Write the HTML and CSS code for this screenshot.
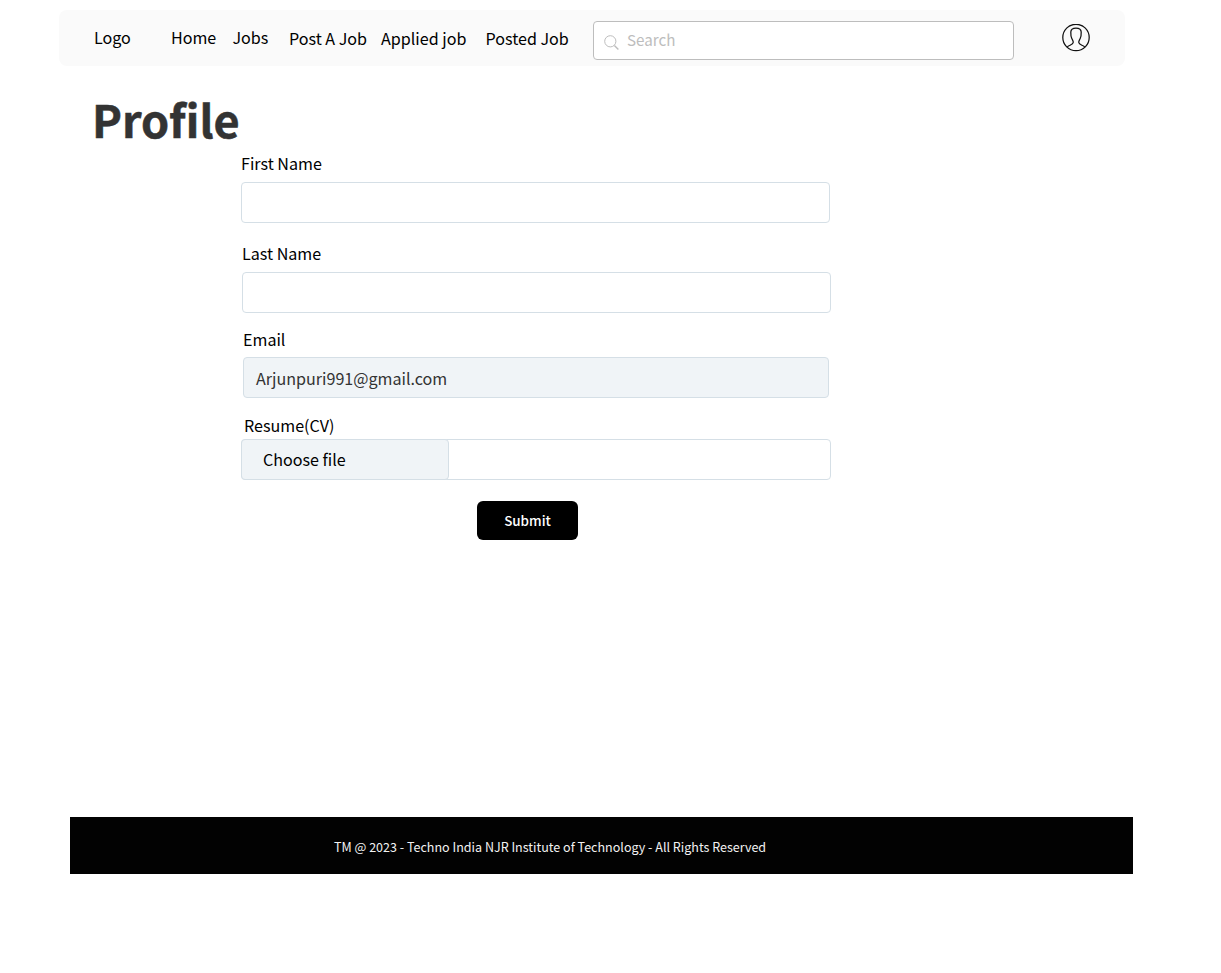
FILE: index.html
```html
<!DOCTYPE html>
<html lang="en">
<head>
<meta charset="utf-8">
<title>Profile</title>
<link rel="stylesheet" href="styles.css">
</head>
<body>
<header class="navbar">
  <a class="logo">Logo</a>
  <nav class="links">
    <a>Home</a>
    <a>Jobs</a>
    <a class="low">Post A Job</a>
    <a class="low">Applied job</a>
    <a class="low">Posted Job</a>
  </nav>
  <div class="search">
    <svg class="search-icon" width="16" height="16" viewBox="0 0 16 16" fill="none" stroke="#bdbdbd">
      <circle cx="6.3" cy="6.3" r="5.6"/>
      <path d="M10.4 10.4L14.4 14.4" stroke-width="1.4"/>
    </svg>
    <span>Search</span>
  </div>
  <svg class="avatar" width="28" height="28" viewBox="0 0 28 28" fill="none" stroke="#111" stroke-width="1.25">
    <circle cx="14" cy="13.5" r="13.2"/>
    <path d="M5.2 23.1C6.6 21.1 10.8 21.1 11.2 18.7C11.5 17 10.6 16.3 9.8 14.5C8.9 12.7 8.7 11 8.8 8C8.9 5.2 10.8 4 14 4S19.1 5.2 19.2 8C19.3 11 19.1 12.7 18.2 14.5C17.4 16.3 16.5 17 16.8 18.7C17.2 21.1 21.4 21.1 22.8 23.1"/>
  </svg>
</header>
<main class="page">
  <h1 class="title">Profile</h1>
  <form class="form">
    <div class="field first">
      <label>First Name</label>
      <div class="input"></div>
    </div>
    <div class="field last">
      <label>Last Name</label>
      <div class="input"></div>
    </div>
    <div class="field email">
      <label>Email</label>
      <div class="input filled">Arjunpuri991@gmail.com</div>
    </div>
    <div class="field resume">
      <label>Resume(CV)</label>
      <div class="input file"><span class="choose">Choose file</span></div>
    </div>
    <button class="submit" type="button">Submit</button>
  </form>
</main>
<footer class="footer">TM @ 2023 - Techno India NJR Institute of Technology - All Rights Reserved</footer>
</body>
</html>
```

FILE: styles.css
```css
* {
  box-sizing: border-box;
}

body {
  margin: 0;
  padding-top: 10px;
  background: #fff;
  color: #000;
  font: 16.1px/24px "Noto Sans CJK SC", "Noto Sans", sans-serif;
}

.navbar {
  display: flex;
  width: 1066px;
  height: 56px;
  margin-left: 59px;
  padding-left: 35px;
  border-radius: 8px;
  background: #fafafa;
  white-space: nowrap;
}

.logo {
  width: 77px;
  padding-top: 15px;
}

.links {
  display: grid;
  grid-template-columns: 61.5px 56.5px 92px 104.5px 107.5px;
  padding-top: 15px;
}

.low {
  padding-top: 1px;
}

.search {
  display: flex;
  width: 421px;
  height: 39px;
  margin-top: 11px;
  padding: 5px 10px;
  gap: 7px;
  border: 1px solid #bdbdbd;
  border-radius: 4px;
  background: #fff;
  color: #bdbdbd;
  font-size: 15.2px;
}

.search-icon {
  margin-top: 8px;
}

.avatar {
  margin: 14px 0 0 48px;
}

.page {
  height: 751px;
  padding: 19px 0 0 92px;
}

.title {
  height: 66px;
  margin: 0;
  color: #333;
  font-size: 45px;
  font-weight: 700;
  line-height: 68px;
  -webkit-text-stroke: 0.5px #333;
}

.form {
  display: flex;
  flex-direction: column;
  width: 590px;
  margin-left: 149px;
}

.field {
  display: flex;
  flex-direction: column;
}

.first {
  height: 90px;
  width: 589px;
}

.last {
  height: 86px;
  width: 589px;
  margin-left: 1px;
}

.email {
  height: 86px;
  width: 586px;
  margin-left: 2px;
}

.resume {
  height: 88px;
}

.input {
  height: 41px;
  margin-top: 7px;
  border: 1px solid #d5dfe6;
  border-radius: 4px;
}

.email .input {
  margin-top: 6px;
}

.filled {
  padding: 8px 12px;
  background: #f0f4f7;
  color: #333;
}

.resume label {
  margin-left: 3px;
}

.resume .input {
  margin-top: 2px;
}

.choose {
  display: block;
  width: 208px;
  height: 41px;
  margin: -1px;
  padding: 7px 21px;
  border: 1px solid #d5dfe6;
  border-radius: 4px;
  background: #f0f4f7;
}

.submit {
  width: 101px;
  height: 39px;
  margin: 0 0 0 236px;
  padding: 0 0 1px;
  border: 0;
  border-radius: 6px;
  background: #000;
  color: #fff;
  font: 500 13.4px/38px "Noto Sans CJK SC", "Noto Sans", sans-serif;
}

.footer {
  width: 1063px;
  height: 57px;
  margin-left: 70px;
  padding: 18px 0 0 264px;
  background: #020202;
  color: #f2f2f2;
  font-size: 12.54px;
  white-space: nowrap;
}
```
